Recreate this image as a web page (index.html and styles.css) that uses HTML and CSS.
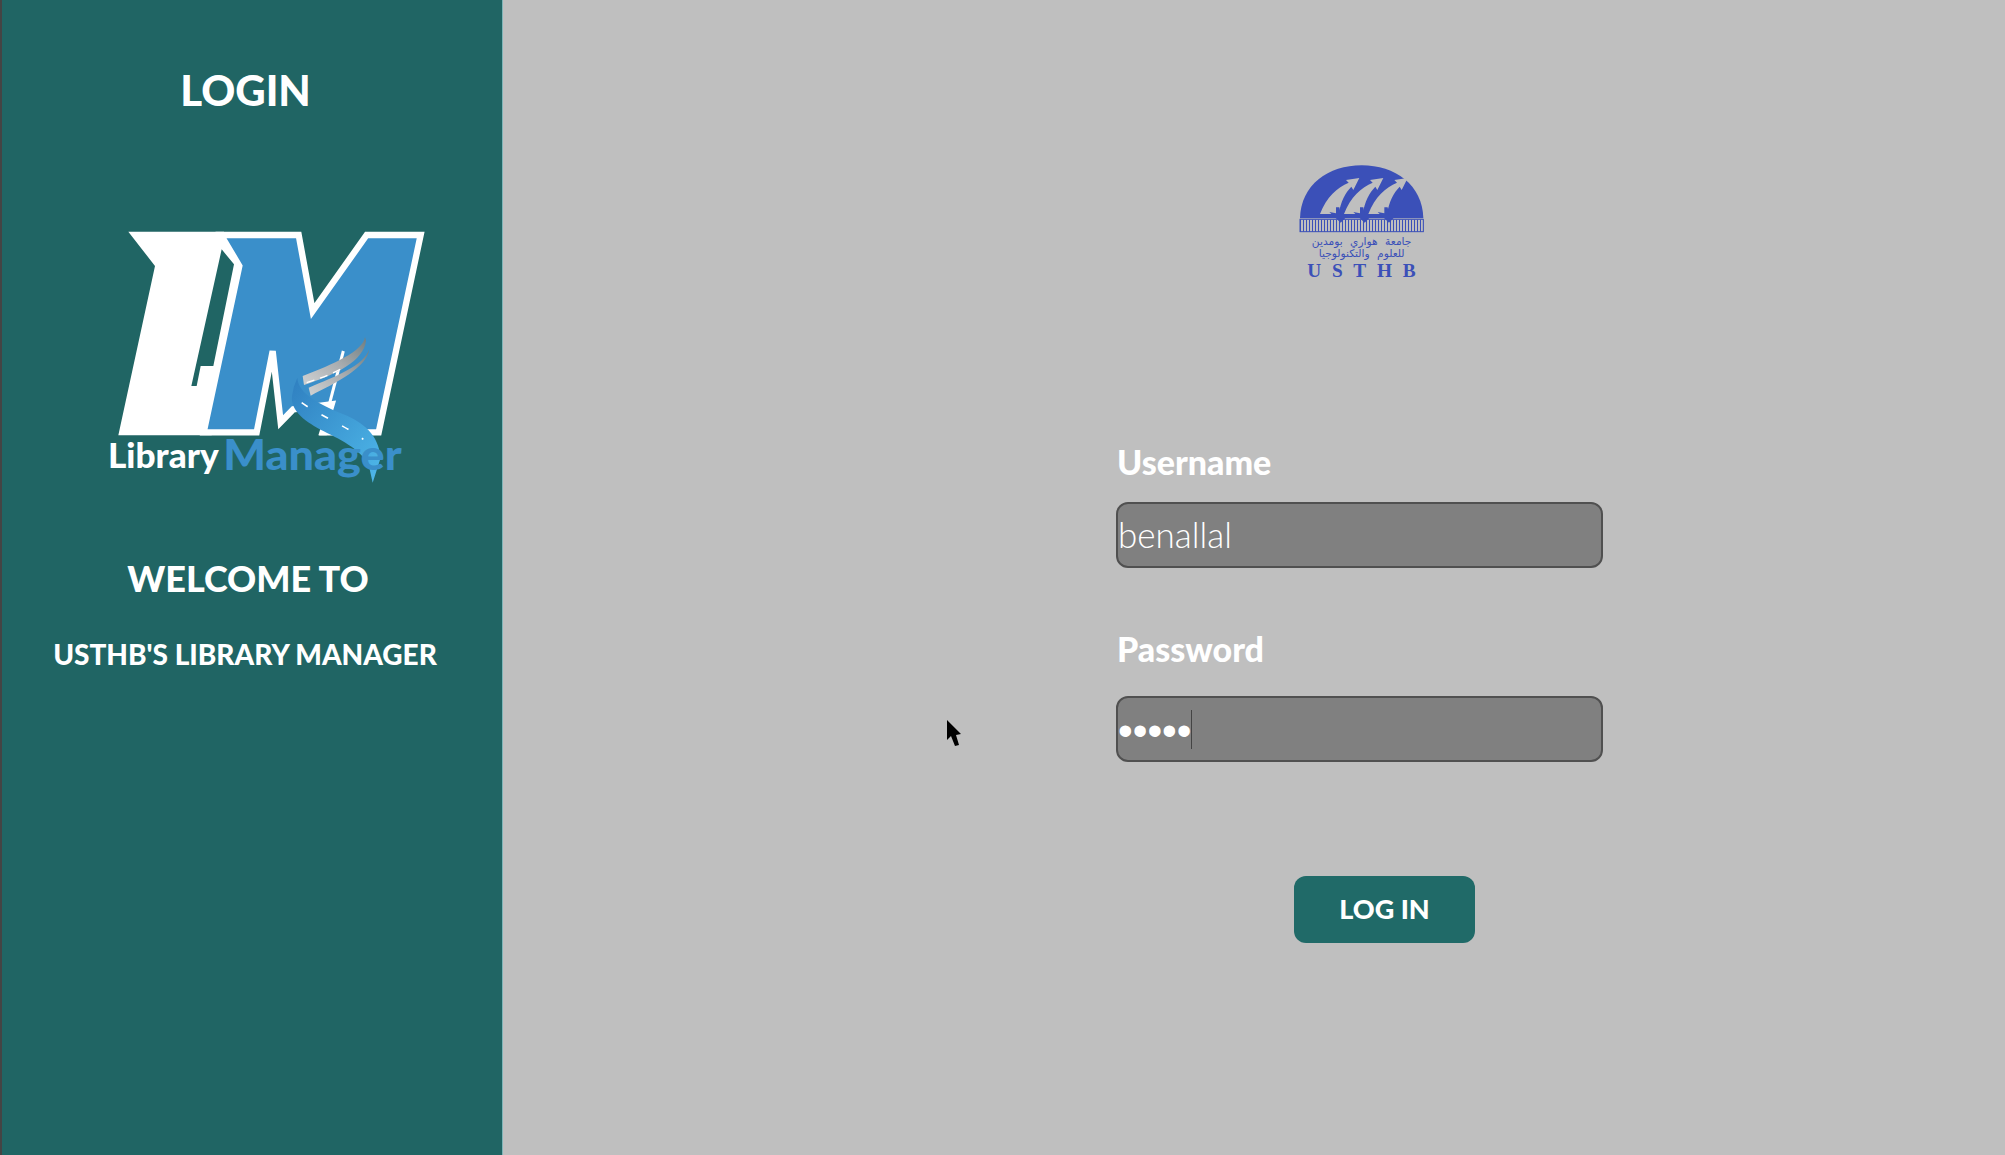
FILE: index.html
```html
<!DOCTYPE html>
<html lang="en">
<head>
    <meta charset="UTF-8">
    <meta name="viewport" content="width=device-width, initial-scale=1.0">
    <title>Login - Library Manager</title>
    <link rel="stylesheet" href="styles.css">
</head>
<body>
    <aside class="sidebar">
        <h1 class="sidebar-title">LOGIN</h1>
        <svg class="app-logo" viewBox="0 0 1140 900" role="img" aria-label="Library Manager logo">
            <defs>
                <linearGradient id="ribbon-grey" x1="1" y1="0" x2="0" y2="1">
                    <stop offset="0" stop-color="#6f7d80"/>
                    <stop offset="0.5" stop-color="#a9adb0"/>
                    <stop offset="1" stop-color="#d0d2d3"/>
                </linearGradient>
                <linearGradient id="ribbon-blue" x1="0" y1="0" x2="1" y2="1">
                    <stop offset="0" stop-color="#2f7fc0"/>
                    <stop offset="1" stop-color="#4fb9ea"/>
                </linearGradient>
            </defs>
            <!-- L -->
            <path fill="#fff" d="M145 92H432L485 195L395 703H115L225 195Z"/>
            <path fill="#206564" d="M425 145L462 190L400 495H362L350 555H334Z"/>
            <!-- M -->
            <path fill="#3a8fca" stroke="#fff" stroke-width="19" stroke-linejoin="miter" d="M423 102H656L698 330L860 102H1022L896 694H730L755 610L640 625L602 664L578 450L530 694H371L478 195Z"/>
            <path fill="none" stroke="#fff" stroke-width="9" d="M790 450L748 610"/>
            <path fill="#fff" d="M715 703L735 640L770 660L740 703Z"/>
            <!-- road -->
            <path fill="url(#ribbon-grey)" d="M855 408C850 450 760 490 668 525L672 552C770 520 850 480 858 420Z"/>
            <path fill="url(#ribbon-grey)" d="M868 445C860 500 770 545 692 584L686 560C770 525 850 495 868 445Z"/>
            <path fill="none" stroke="#fff" stroke-width="4" stroke-dasharray="24 18" d="M680 545C720 532 760 518 790 500"/>
            <path fill="url(#ribbon-blue)" d="M652 530C655 580 720 610 790 640C850 665 895 700 902 770L878 845L868 800C850 750 790 720 730 690C680 665 630 630 636 585Q640 555 652 530Z"/>
            <path fill="none" stroke="#fff" stroke-width="5" stroke-dasharray="22 48" d="M665 605C720 645 790 670 850 715"/>
            <text class="logo-library" x="84" y="802" textLength="332" lengthAdjust="spacingAndGlyphs">Library</text>
            <text class="logo-manager" x="430" y="806" textLength="535" lengthAdjust="spacingAndGlyphs">Manager</text>
        </svg>
        <h2 class="welcome">WELCOME TO</h2>
        <h3 class="welcome-sub">USTHB'S LIBRARY MANAGER</h3>
    </aside>

    <main class="content">
        <svg class="usthb-logo" viewBox="0 0 540 420" role="img" aria-label="USTHB logo">
            <defs>
                <g id="swoosh">
                    <path fill="#bfbfbf" d="M150 192C170 140 202 112 236 98L228 90L268 84L250 120L244 110C226 128 212 155 206 192Z"/>
                    <path fill="#3b50b8" d="M178 186L198 190L198 172L208 172L212 194L234 196L212 218Z"/>
                </g>
            </defs>
            <path fill="#3b50b8" d="M90 205C92 105 175 46 275 46C375 46 458 105 460 205Z"/>
            <use href="#swoosh"/>
            <use href="#swoosh" x="72"/>
            <use href="#swoosh" x="145"/>
            <line x1="90" y1="227" x2="460" y2="227" stroke="#3b50b8" stroke-width="36" stroke-dasharray="3 6"/>
            <rect x="90" y="208" width="370" height="37" fill="none" stroke="#3b50b8" stroke-width="3"/>
            <text class="usthb-arabic" x="275" y="284">جامعة هواري بومدين</text>
            <text class="usthb-arabic" x="275" y="320">للعلوم والتكنولوجيا</text>
            <text class="usthb-name" x="112" y="380">USTHB</text>
        </svg>

        <form class="login-form">
            <label class="field-label" for="username">Username</label>
            <input class="field-input" type="text" id="username" value="benallal">

            <label class="field-label password-label" for="password">Password</label>
            <div class="password-wrap">
                <input class="field-input password-input" type="password" id="password" value="12345">
                <span class="caret"></span>
            </div>

            <button class="login-btn" type="button">LOG IN</button>
        </form>

        <svg class="mouse-cursor" viewBox="0 0 16 28" aria-hidden="true">
            <path fill="#000" d="M1 0V20L5 16L9 26L13 25L10 15L15 14Z"/>
        </svg>
    </main>
</body>
</html>
```

FILE: styles.css
```css
* {
    box-sizing: border-box;
}
body {
    font-family: "Lato", "Liberation Sans", sans-serif;
    margin: 0;
    height: 1155px;
    overflow: hidden;
    display: flex;
    background-color: #bfbfbf;
}
.sidebar {
    width: 503px;
    height: 100%;
    padding-top: 64px;
    background-color: #206564;
    border-left: 2px solid #444;
    border-right: 1px solid #7fb5b8;
    color: white;
}
.sidebar-title {
    margin: 0 0 85px;
    padding-right: 13px;
    font-size: 42px;
    line-height: 52px;
    font-weight: 900;
    text-align: center;
}
.app-logo {
    display: block;
    width: 380px;
    height: 300px;
    margin-left: 78px;
}
.logo-library {
    font-size: 104px;
    font-weight: 900;
    fill: white;
}
.logo-manager {
    font-size: 126px;
    font-weight: 900;
    fill: #3a8fca;
}
.welcome {
    margin: 55px 0 0;
    padding-right: 8px;
    font-size: 36px;
    line-height: 44px;
    font-weight: 900;
    text-align: center;
}
.welcome-sub {
    margin: 36px 0 0;
    padding-right: 14px;
    font-size: 28px;
    line-height: 36px;
    font-weight: 900;
    text-align: center;
}
.content {
    flex: 1;
    position: relative;
    padding-top: 150px;
}
.usthb-logo {
    display: block;
    width: 180px;
    height: 140px;
    margin-left: 767px;
}
.usthb-arabic {
    font-family: "DejaVu Sans", sans-serif;
    font-size: 32px;
    word-spacing: 12px;
    text-anchor: middle;
    fill: #3b50b8;
}
.usthb-name {
    font-family: "Liberation Serif", serif;
    font-size: 58px;
    font-weight: 700;
    letter-spacing: 32px;
    fill: #3b50b8;
}
.login-form {
    width: 487px;
    margin: 149px 0 0 613px;
}
.field-label {
    display: block;
    padding-left: 1px;
    margin-bottom: 17px;
    font-size: 34px;
    line-height: 46px;
    font-weight: 900;
    color: white;
}
.password-label {
    margin-top: 58px;
    margin-bottom: 24px;
}
.field-input {
    display: block;
    width: 100%;
    height: 66px;
    padding: 0 0 2px;
    background-color: #808080;
    border: 2px solid #505050;
    border-radius: 12px;
    font-family: "Lato", "Liberation Sans", sans-serif;
    font-size: 35px;
    font-weight: 300;
    color: white;
    outline: none;
}
.password-input {
    padding: 3px 0 0;
    font-family: "Liberation Sans", sans-serif;
    font-size: 42px;
    font-weight: 400;
}
.password-wrap {
    position: relative;
}
.caret {
    position: absolute;
    left: 75px;
    top: 14px;
    width: 1px;
    height: 39px;
    background-color: #444;
}
.login-btn {
    display: block;
    width: 181px;
    height: 67px;
    margin: 114px 0 0 178px;
    padding: 0 0 2px;
    background-color: #206a68;
    border: none;
    border-radius: 12px;
    font-family: "Lato", "Liberation Sans", sans-serif;
    font-size: 27px;
    font-weight: 900;
    color: white;
}
.mouse-cursor {
    position: absolute;
    left: 443px;
    top: 720px;
    width: 16px;
    height: 28px;
}
```
